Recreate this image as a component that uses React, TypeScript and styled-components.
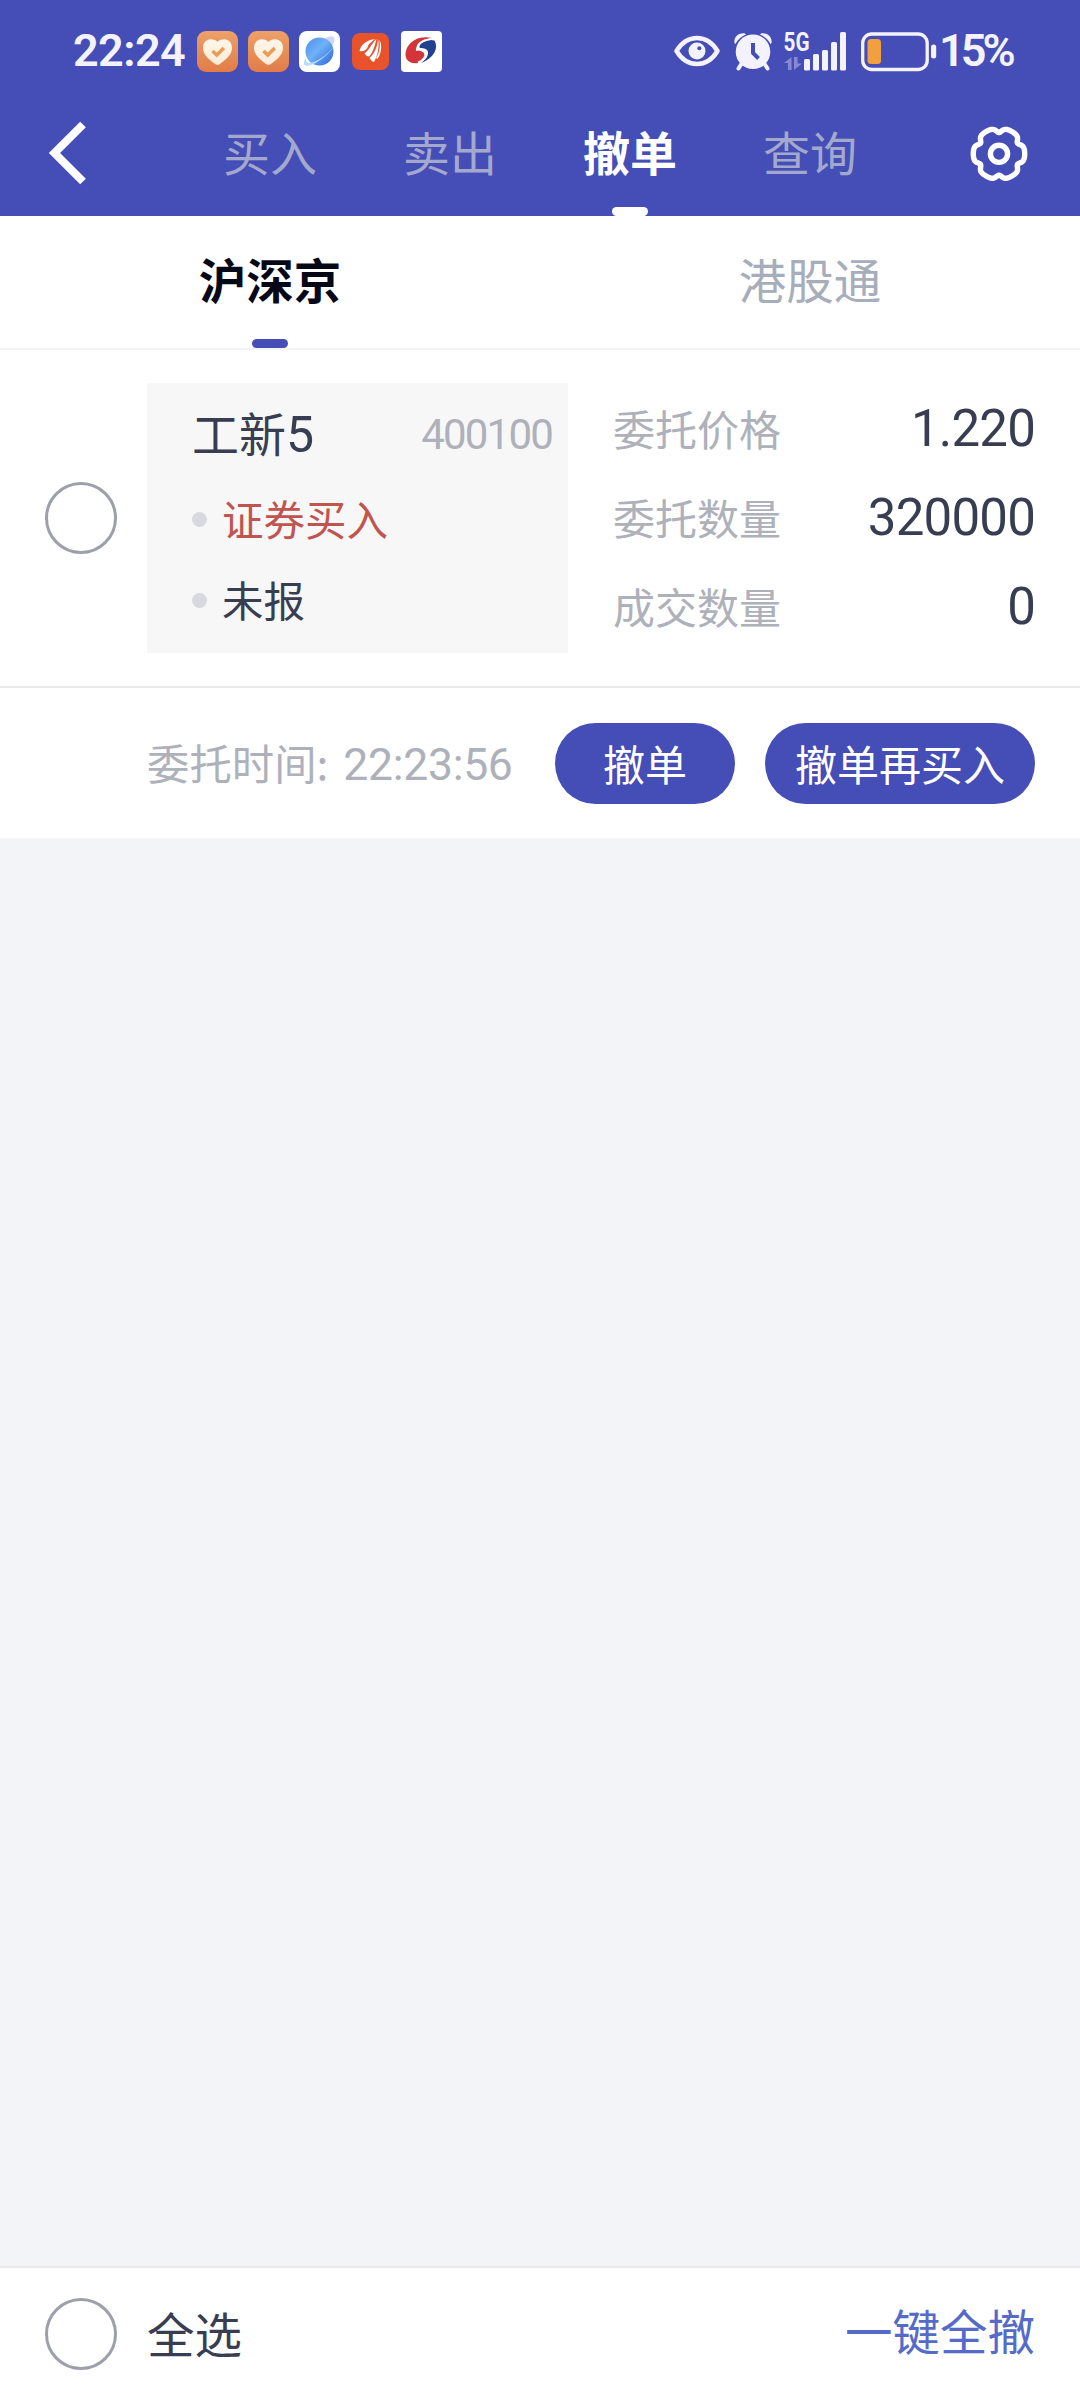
import React from 'react';
import styled, { createGlobalStyle } from 'styled-components';

const CJK = '"Noto Sans CJK SC", "Noto Sans", sans-serif';
const NUM = 'Roboto, "Noto Sans CJK SC", sans-serif';
const PRIMARY = '#454db6';
const INK = '#383d51';
const MUTED = '#aeb1ba';

const GlobalStyle = createGlobalStyle`
  * { box-sizing: border-box; }
  body { margin: 0; background: #f3f4f7; font-family: ${CJK}; }
  button { border: 0; padding: 0; margin: 0; background: none; font: inherit; color: inherit; }
  svg { display: block; flex: none; }
`;

const Screen = styled.div`
  width: 1080px;
  height: 2400px;
  display: flex;
  flex-direction: column;
  background: #f3f4f7;
  overflow: hidden;
`;

const Header = styled.header`
  height: 216px;
  flex: none;
  background: ${PRIMARY};
`;

const StatusBar = styled.div`
  height: 100px;
  padding: 2px 66px 0 73px;
  display: flex;
  align-items: center;
  justify-content: space-between;
  color: #f4f3fd;
`;

const StatusGroup = styled.div`
  display: flex;
  align-items: center;
`;

const StatusText = styled.span<{ $width: number; $spacing: number; $indent?: number }>`
  width: ${p => p.$width}px;
  padding-left: ${p => p.$indent ?? 0}px;
  font: 600 45px/60px ${NUM};
  letter-spacing: ${p => p.$spacing}px;
  white-space: nowrap;
`;

const AppIcons = styled.div`
  display: flex;
  align-items: center;
  gap: 10px;
`;

const NavBar = styled.nav`
  height: 116px;
  display: flex;
  justify-content: space-between;
`;

const IconButton = styled.button<{ $side: 'left' | 'right' }>`
  width: 180px;
  height: 106px;
  display: flex;
  align-items: center;
  justify-content: ${p => (p.$side === 'left' ? 'flex-start' : 'flex-end')};
  padding: ${p => (p.$side === 'left' ? '0 0 0 46px' : '0 51px 0 0')};
`;

const NavTabs = styled.div`
  display: flex;
  width: 720px;
`;

const NavTab = styled.button<{ $active?: boolean }>`
  flex: 1;
  display: flex;
  flex-direction: column;
  align-items: center;
  justify-content: space-between;
  color: ${p => (p.$active ? '#fff' : '#a3a8cd')};
  font: ${p => (p.$active ? 700 : 400)} 47px/102px ${CJK};
`;

const Indicator = styled.i<{ $color: string }>`
  width: 36px;
  height: 9px;
  border-radius: 4.5px;
  background: ${p => p.$color};
`;

const MarketTabs = styled.div`
  height: 134px;
  flex: none;
  display: flex;
  background: #fff;
  border-bottom: 2px solid #f3f3f4;
`;

const MarketTab = styled.button<{ $active?: boolean }>`
  flex: 1;
  padding-top: 3px;
  display: flex;
  flex-direction: column;
  align-items: center;
  justify-content: space-between;
  color: ${p => (p.$active ? '#060817' : '#a6adbb')};
  font: ${p => (p.$active ? 700 : 400)} 47.5px/120px ${CJK};
`;

const Order = styled.section`
  flex: none;
  background: #fff;
`;

const OrderMain = styled.div`
  height: 338px;
  padding: 33px 45px 33px;
  display: flex;
  border-bottom: 2px solid #e9e9ea;
`;

const Radio = styled.span`
  width: 72px;
  height: 72px;
  flex: none;
  align-self: center;
  border: 3px solid #9da0aa;
  border-radius: 50%;
`;

const SecurityBox = styled.div`
  width: 421px;
  height: 270px;
  margin-left: 30px;
  padding: 3px 16px 0 45px;
  background: #f7f7f7;
`;

const NameRow = styled.div`
  height: 91px;
  display: flex;
  align-items: center;
  justify-content: space-between;
`;

const Name = styled.span`
  color: ${INK};
  font: 400 47px/91px ${CJK};
  white-space: nowrap;
`;

const NameDigit = styled.span`
  font: 400 50px/50px ${NUM};
`;

const Code = styled.span`
  padding-top: 6px;
  color: ${MUTED};
  font: 400 42px/60px ${NUM};
  letter-spacing: -1.8px;
`;

const Fact = styled.div<{ $color: string }>`
  height: 81px;
  padding-top: 2px;
  display: flex;
  align-items: center;
  gap: 15px;
  color: ${p => p.$color};
  font: 400 41.5px/79px ${CJK};
`;

const Dot = styled.i`
  width: 15px;
  height: 15px;
  margin-top: 1px;
  border-radius: 50%;
  background: #d7d9df;
`;

const Figures = styled.div`
  flex: 1;
  height: 268px;
  margin-left: 45px;
  display: grid;
  grid-template-rows: repeat(3, 1fr);
`;

const Figure = styled.div`
  display: flex;
  align-items: center;
  justify-content: space-between;
`;

const FigureLabel = styled.span`
  color: ${MUTED};
  font: 400 42px/60px ${CJK};
`;

const FigureValue = styled.span`
  padding-top: 2px;
  color: ${INK};
  font: 400 51px/60px ${NUM};
  letter-spacing: -0.8px;
`;

const OrderFooter = styled.div`
  height: 150px;
  padding: 0 45px 0 147px;
  display: flex;
  align-items: center;
`;

const TimeLabel = styled.span`
  flex: 1;
  display: flex;
  align-items: baseline;
  color: ${MUTED};
  font: 400 42.4px/60px ${CJK};
  white-space: nowrap;
`;

const TimeValue = styled.span`
  margin-left: 15px;
  font: 400 44.5px/60px ${NUM};
  letter-spacing: -0.3px;
`;

const Pill = styled.button<{ $width: number }>`
  width: ${p => p.$width}px;
  height: 81px;
  margin-left: 30px;
  padding-bottom: 2px;
  border-radius: 41px;
  background: ${PRIMARY};
  color: #fff;
  font: 400 42px/79px ${CJK};
`;

const Spacer = styled.main`
  flex: 1;
`;

const BottomBar = styled.footer`
  height: 134px;
  flex: none;
  padding: 0 45px;
  display: flex;
  align-items: center;
  background: #fff;
  border-top: 2px solid #e9e9ea;
`;

const SelectAll = styled.span`
  flex: 1;
  margin-left: 30px;
  color: ${INK};
  font: 400 47.5px/129px ${CJK};
  padding-bottom: 3px;
`;

const CancelAll = styled.button`
  color: #566bc8;
  font: 400 47.5px/124px ${CJK};
  padding-bottom: 8px;
`;

function HeartApp() {
  return (
    <svg width="41" height="41" viewBox="0 0 41 41">
      <defs>
        <linearGradient id="orange" x1="0" y1="0" x2="0" y2="1">
          <stop offset="0" stopColor="#eda168" />
          <stop offset="1" stopColor="#e27c48" />
        </linearGradient>
        <linearGradient id="cream" x1="0" y1="0" x2="0" y2="1">
          <stop offset="0" stopColor="#fff6ea" />
          <stop offset="1" stopColor="#fdebd8" />
        </linearGradient>
      </defs>
      <rect width="41" height="41" rx="9" fill="url(#orange)" />
      <path d="M20.500 11C17 6.500 6 7 6 17C6 24 13 29.500 18.500 33.200Q20.500 34.600 22.500 33.200C28 29.500 35 24 35 17C35 7 24 6.500 20.500 11Z" fill="url(#cream)" />
      <path d="M15.500 20l4.300 4 7-7" fill="none" stroke="#e99d55" strokeWidth="3.600" />
    </svg>
  );
}

function PlanetApp() {
  return (
    <svg width="41" height="41" viewBox="0 0 41 41">
      <defs>
        <linearGradient id="planet" x1="0" y1="0" x2="1" y2="1">
          <stop offset="0" stopColor="#4f8df0" />
          <stop offset=".45" stopColor="#6fb2f6" />
          <stop offset="1" stopColor="#2b62dc" />
        </linearGradient>
      </defs>
      <rect width="41" height="41" rx="8" fill="#fff" />
      <path d="M25 8C31 4 36 4.500 35.500 9C35 13 32 17 29 20Z" fill="#cfd6fa" />
      <circle cx="20.500" cy="20.500" r="14" fill="url(#planet)" />
      <path d="M7 26C3 33 5 36.500 12 34C20 31 30 23 34.500 16C29 23 20 29.500 13 31.500C8 33 6 30 7 26Z" fill="#b5dcfb" />
    </svg>
  );
}

function WingApp() {
  return (
    <svg width="41" height="41" viewBox="0 0 41 41">
      <rect x="2" y="2" width="37" height="37" rx="8" fill="#e8532b" />
      <g fill="#fff">
        <path d="M25 8C17 9 11 13 9.500 20C13 21 16 19 17.500 16.500C18 13.500 21 11 25 8Z" />
        <path d="M26.500 8C22 12 20 18 14.500 22.500Q16 25 19 25.500C23 22 25 14 26.500 8Z" />
        <path d="M28 8C27.500 15 25 22 19.500 27Q21 30 24 31C28 24 29.500 15 28 8Z" />
        <path d="M29.300 8.500C30.500 15 29.500 22 26 27L27.500 28C31.500 22 32.500 14 29.300 8.500Z" />
      </g>
    </svg>
  );
}

function SwirlApp() {
  return (
    <svg width="41" height="41" viewBox="0 0 41 41">
      <rect width="41" height="41" rx="4" fill="#fff" />
      <path d="M31 7C20 4 9 9 5.500 18C2 28 8 33.500 17 32C24 30.500 26 25 22.500 21.500C20 19 16 19 15 20C14 15 20 9 31 7Z" fill="#d3353b" />
      <path d="M33.500 9.500C38 17 33 27 20 32C27.500 27 28.500 21 25.500 18.500C22.500 16.500 20 18 18.500 16.500C18 11.500 27 7.500 33.500 9.500Z" fill="#233f8f" />
      <path d="M30 8C20 9.500 15.500 14 17 17.500C18.500 19.500 24.500 18 24.500 23C24.500 27 21 30 17 31.500" fill="none" stroke="#fff" strokeWidth="2" />
    </svg>
  );
}

function EyeIcon() {
  return (
    <svg width="46" height="32" viewBox="0 0 46 32">
      <path d="M2.500 16C13 -1.300 33 -1.300 43.500 16C33 33.300 13 33.300 2.500 16Z" fill="none" stroke="#f4f3fd" strokeWidth="4.500" strokeLinejoin="round" />
      <circle cx="23" cy="16" r="8.500" fill="#f4f3fd" />
      <circle cx="25.300" cy="13.200" r="2" fill={PRIMARY} />
    </svg>
  );
}

const StatusIcon = styled.svg<{ $gap: number }>`
  margin-left: ${p => p.$gap}px;
  overflow: visible;
`;

function AlarmIcon() {
  return (
    <StatusIcon width="38" height="39" viewBox="0 0 38 39" $gap={14}>
      <path d="M8 31l-3.500 5.500M30 31l3.500 5.500" stroke="#f4f3fd" strokeWidth="4" strokeLinecap="round" />
      <path d="M.5 11C-.5 5 5 .5 11 1.500L12 2.500Q4.500 5.500 1.500 12ZM37.500 11C38.500 5 33 .5 27 1.500L26 2.500Q33.500 5.500 36.500 12Z" fill="#f4f3fd" />
      <circle cx="19" cy="19.800" r="17.300" fill="#f4f3fd" />
      <path d="M19 11v10l5.500 5.500" fill="none" stroke={PRIMARY} strokeWidth="4" />
    </StatusIcon>
  );
}

const SignalText = styled.text`
  font: 700 25px ${NUM};
  fill: #f4f3fd;
`;

function SignalIcon() {
  const bars: [number, number][] = [[20, 27], [29, 22], [38, 18], [47, 10], [56, 0]];
  return (
    <StatusIcon width="62" height="39" viewBox="0 0 62 39" $gap={12}>
      <SignalText x="-0.5" y="18.500" textLength="26" lengthAdjust="spacingAndGlyphs">5G</SignalText>
      <path d="M7.500 25v13h-3.500v-7H0ZM10 25h3.500v6.500H18L10 38Z" fill="#8689d3" />
      {bars.map(([x, y]) => (
        <rect key={x} x={x} y={y} width="6" height={38.5 - y} rx="1.500" fill="#f4f3fd" />
      ))}
    </StatusIcon>
  );
}

function BatteryIcon() {
  return (
    <StatusIcon width="76" height="39" viewBox="0 0 76 39" $gap={15}>
      <rect x="1.700" y="2" width="64.500" height="35.500" rx="9" fill="none" stroke="#f4f3fd" strokeWidth="3.300" />
      <rect x="6.500" y="7" width="13.500" height="25" rx="3.500" fill="#f0a03f" />
      <rect x="70" y="12.500" width="5.200" height="14" rx="2.500" fill="#f4f3fd" />
    </StatusIcon>
  );
}

// Six-toothed gear outline: a ring with a soft notch every 60 degrees.
function gearPath(cx: number, cy: number) {
  const points: string[] = [];
  for (let deg = 0; deg < 360; deg += 2) {
    const d = (deg % 60) - 30;
    const r = 25.7 - 4.4 * Math.exp(-((d / 9.5) ** 2));
    const t = (deg * Math.PI) / 180;
    points.push(`${(cx + r * Math.cos(t)).toFixed(2)} ${(cy + r * Math.sin(t)).toFixed(2)}`);
  }
  return `M${points.join('L')}Z`;
}

function GearIcon() {
  return (
    <svg width="60" height="60" viewBox="0 0 60 60" fill="none" stroke="#fff" strokeWidth="5.400">
      <path d={gearPath(30, 30.8)} strokeLinejoin="round" />
      <circle cx="30" cy="30.800" r="8.600" />
    </svg>
  );
}

const navItems = ['买入', '卖出', '撤单', '查询'];
const figures = [
  { label: '委托价格', value: '1.220' },
  { label: '委托数量', value: '320000' },
  { label: '成交数量', value: '0' },
];

export default function App() {
  return (
    <Screen>
      <GlobalStyle />
      <Header>
        <StatusBar>
          <StatusGroup>
            <StatusText $width={124} $spacing={-0.6}>22:24</StatusText>
            <AppIcons>
              <HeartApp />
              <HeartApp />
              <PlanetApp />
              <WingApp />
              <SwirlApp />
            </AppIcons>
          </StatusGroup>
          <StatusGroup>
            <EyeIcon />
            <AlarmIcon />
            <SignalIcon />
            <BatteryIcon />
            <StatusText $width={77} $spacing={-4} $indent={2}>15%</StatusText>
          </StatusGroup>
        </StatusBar>
        <NavBar>
          <IconButton $side="left" aria-label="返回">
            <svg width="44" height="66" viewBox="0 0 44 66" fill="none" stroke="#fff" strokeWidth="8">
              <path d="M37 4.500L8.500 33L37 61.500" />
            </svg>
          </IconButton>
          <NavTabs>
            {navItems.map(item => (
              <NavTab key={item} $active={item === '撤单'}>
                {item}
                {item === '撤单' && <Indicator $color="#fff" />}
              </NavTab>
            ))}
          </NavTabs>
          <IconButton $side="right" aria-label="设置">
            <GearIcon />
          </IconButton>
        </NavBar>
      </Header>

      <MarketTabs>
        <MarketTab $active>
          沪深京
          <Indicator $color={PRIMARY} />
        </MarketTab>
        <MarketTab>港股通</MarketTab>
      </MarketTabs>

      <Order>
        <OrderMain>
          <Radio />
          <SecurityBox>
            <NameRow>
              <Name>工新<NameDigit>5</NameDigit></Name>
              <Code>400100</Code>
            </NameRow>
            <Fact $color="#c0544f"><Dot />证券买入</Fact>
            <Fact $color={INK}><Dot />未报</Fact>
          </SecurityBox>
          <Figures>
            {figures.map(f => (
              <Figure key={f.label}>
                <FigureLabel>{f.label}</FigureLabel>
                <FigureValue>{f.value}</FigureValue>
              </Figure>
            ))}
          </Figures>
        </OrderMain>
        <OrderFooter>
          <TimeLabel>委托时间:<TimeValue>22:23:56</TimeValue></TimeLabel>
          <Pill $width={180}>撤单</Pill>
          <Pill $width={270}>撤单再买入</Pill>
        </OrderFooter>
      </Order>

      <Spacer />

      <BottomBar>
        <Radio />
        <SelectAll>全选</SelectAll>
        <CancelAll>一键全撤</CancelAll>
      </BottomBar>
    </Screen>
  );
}
